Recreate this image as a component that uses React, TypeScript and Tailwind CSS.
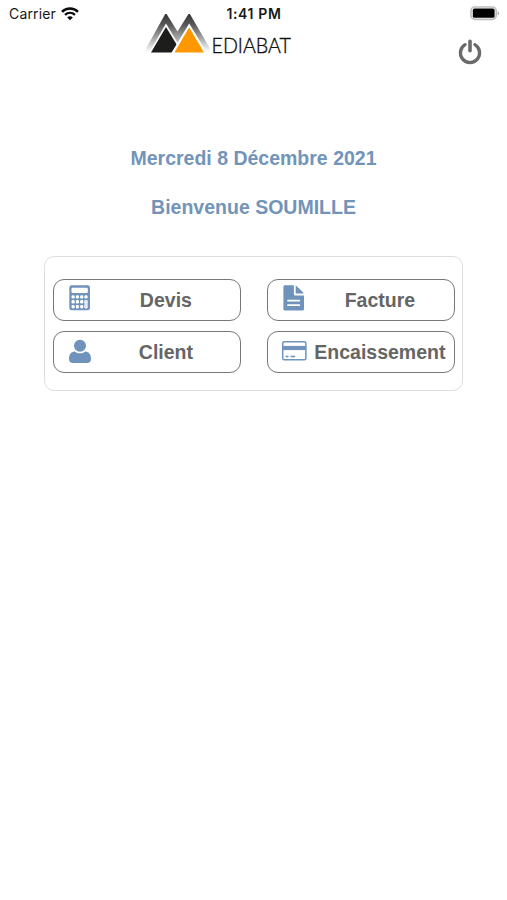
import type { ReactNode } from 'react'

function WifiIcon() {
  return (
    <svg width="18" height="14" viewBox="0 0 18 14" fill="none" stroke="#0a0a0a">
      <path d="M1 4.8C5.4 .4 12.6 .4 17 4.8" strokeWidth="2.4" />
      <path d="M4 7.9c2.9-2.7 7.1-2.7 10 0" strokeWidth="2.3" />
      <path d="M9 13.2 6.2 10.4c1.6-1.5 4-1.5 5.6 0z" fill="#0a0a0a" stroke="none" />
    </svg>
  )
}

function BatteryIcon() {
  return (
    <svg width="30" height="15" viewBox="0 0 30 15">
      <rect x="1" y="1" width="25.2" height="12.4" rx="3.8" fill="#fff" stroke="#bdbdbd" strokeWidth="1.6" />
      <rect x="2.8" y="2.6" width="21.8" height="9.2" rx="1.6" fill="#000" />
      <path d="M27.6 5v4.6c2-.8 2-3.8 0-4.6z" fill="#b0b0b0" />
    </svg>
  )
}

function LogoMark() {
  return (
    <svg width="64" height="42" viewBox="0 0 64 42">
      <defs>
        <linearGradient id="peak" x1="0" y1="0" x2="0" y2="1">
          <stop offset="0" stopColor="#333" />
          <stop offset=".3" stopColor="#5c5c5c" />
          <stop offset=".65" stopColor="#aaa" />
          <stop offset="1" stopColor="#fff" />
        </linearGradient>
      </defs>
      <path d="M19.2 1h1.4L31.5 18.500 42.500 1h1.400L66 39H-2z" fill="url(#peak)" />
      <path d="M20 10.500 38 40.500H2.500z" fill="#fff" />
      <path d="M20 14 35.500 39.500H5z" fill="#1d1d1b" />
      <path d="M43.200 10.500 61.300 40.500H25z" fill="#fff" />
      <path d="M43.200 14.200 58 39.500H28.400z" fill="#ff9800" />
    </svg>
  )
}

function PowerIcon() {
  return (
    <svg width="24" height="26" viewBox="0 0 24 26" fill="none" stroke="#6a6a6a" strokeWidth="3.3" strokeLinecap="round">
      <path d="M7.1 5.7a9.6 9.6 0 1 0 9.8 0" />
      <path d="M12 2.2v9.6" strokeWidth="3.6" />
    </svg>
  )
}

function CalculatorIcon() {
  return (
    <svg width="24" height="26" viewBox="0 0 24 26">
      <rect x="2.300" y=".3" width="20.700" height="25" rx="2.400" fill="#6f93bb" />
      <rect x="4.500" y="2.800" width="16.300" height="5.200" rx="1" fill="#fff" />
      {[10.2, 15.1, 20].map((y) =>
        [4.5, 8.8, 13.1, 17.4].map((x) => (
          <rect key={`${x}-${y}`} x={x} y={y} width="3.200" height="3.400" rx="1.300" fill="#fff" />
        ))
      )}
      <rect x="17.400" y="15.100" width="3.200" height="8.300" rx="1.300" fill="#e3ebf4" />
    </svg>
  )
}

function FileIcon() {
  return (
    <svg width="24" height="26" viewBox="0 0 24 26">
      <path d="M4 .3h8.900v8.600c0 .9.6 1.500 1.500 1.500h8.600v13.500c0 .9-.7 1.600-1.600 1.600H4c-.9 0-1.600-.7-1.600-1.600V1.900C2.400 1 3.100.3 4 .3z" fill="#6f93bb" />
      <path d="M14.700.5c.4.2.7.4 1 .7l6.100 5.900c.3.300.6.8.8 1.300h-7.900z" fill="#6f93bb" />
      <path d="M7 15.600h11.300M7 20.200h11.300" stroke="#fff" strokeWidth="1.800" strokeLinecap="round" />
    </svg>
  )
}

function UserIcon() {
  return (
    <svg width="24" height="27" viewBox="0 -1.500 24 27" fill="#6f93bb">
      <path d="M7.700 12.900c-3.900.2-5.700 3.100-5.700 7.600 0 2.700 1.500 4.100 3.900 4.100h14.200c2.400 0 3.900-1.400 3.900-4.100 0-4.500-1.800-7.400-5.700-7.600-1.500 1.200-3.100 1.900-5.300 1.900s-3.800-.7-5.300-1.900z" />
      <circle cx="13" cy="7.300" r="6" />
    </svg>
  )
}

function CardIcon() {
  return (
    <svg width="26" height="27" viewBox="0 -1.200 26 27">
      <rect x="1.700" y="3.600" width="23.200" height="18" rx="1.600" fill="#fff" stroke="#6f93bb" strokeWidth="1.500" />
      <path d="M1.500 7.700h23.500v4.200H1.500z" fill="#6f93bb" />
      <path d="M4.500 18.300h3M9.500 18.300h4.700" stroke="#6f93bb" strokeWidth="1.500" />
    </svg>
  )
}

function MenuButton({ icon, label }: { icon: ReactNode; label: string }) {
  return (
    <button className="flex h-[42px] items-start rounded-[11px] border-[1.400px] border-[#777] bg-white">
      <span className="mt-[5px] ml-[13px] w-[26px] shrink-0">{icon}</span>
      <span className="h-10 flex-1 pr-px text-center leading-[40px] text-[#656565]">{label}</span>
    </button>
  )
}

const MENU = [
  { label: 'Devis', icon: <CalculatorIcon /> },
  { label: 'Facture', icon: <FileIcon /> },
  { label: 'Client', icon: <UserIcon /> },
  { label: 'Encaissement', icon: <CardIcon /> },
]

export default function App() {
  return (
    <div className="h-[900px] w-[507px] overflow-hidden bg-white font-['Liberation_Sans',Arial,sans-serif]">
      {/* Status bar */}
      <div className="grid h-[13px] grid-cols-3 items-start font-['Inter',sans-serif] text-[14px] leading-[27px] text-[#171717]">
        <div className="flex h-[27px] items-center gap-[5px] pl-[9px] tracking-[0.15px]">
          <span>Carrier</span>
          <WifiIcon />
        </div>
        <div className="pl-px text-center font-semibold tracking-[0.65px]">1:41 PM</div>
        <div className="flex h-[27px] items-center justify-end pr-[7px]">
          <BatteryIcon />
        </div>
      </div>

      <header className="flex h-[54px] items-start justify-between pr-[25px] pl-[146px]">
        <div className="flex items-start">
          <LogoMark />
          <svg width="90" height="54" viewBox="0 0 90 54" className="overflow-visible">
            <text x="1.500" y="39.600" fontSize="22" textLength="79.500" lengthAdjust="spacingAndGlyphs" fill="#111" stroke="#111" strokeWidth=".4" className="font-['Lato',sans-serif] font-light">
              EDIABAT
            </text>
          </svg>
        </div>
        <button className="mt-[26px]" aria-label="Déconnexion">
          <PowerIcon />
        </button>
      </header>

      <main className="pt-[79px] text-[19.500px] font-bold">
        <p className="text-center leading-[25px] text-[#7294b9]">Mercredi 8 Décembre 2021</p>
        <p className="mt-6 text-center leading-[25px] text-[#7294b9]">Bienvenue SOUMILLE</p>

        <section className="mt-[35.500px] ml-[44.400px] grid h-[135px] w-[419px] grid-cols-2 content-start gap-x-[26px] gap-y-[10.500px] rounded-[10px] border border-[#dedede] px-[7.500px] pt-[22px]">
          {MENU.map(({ label, icon }) => (
            <MenuButton key={label} icon={icon} label={label} />
          ))}
        </section>
      </main>
    </div>
  )
}
